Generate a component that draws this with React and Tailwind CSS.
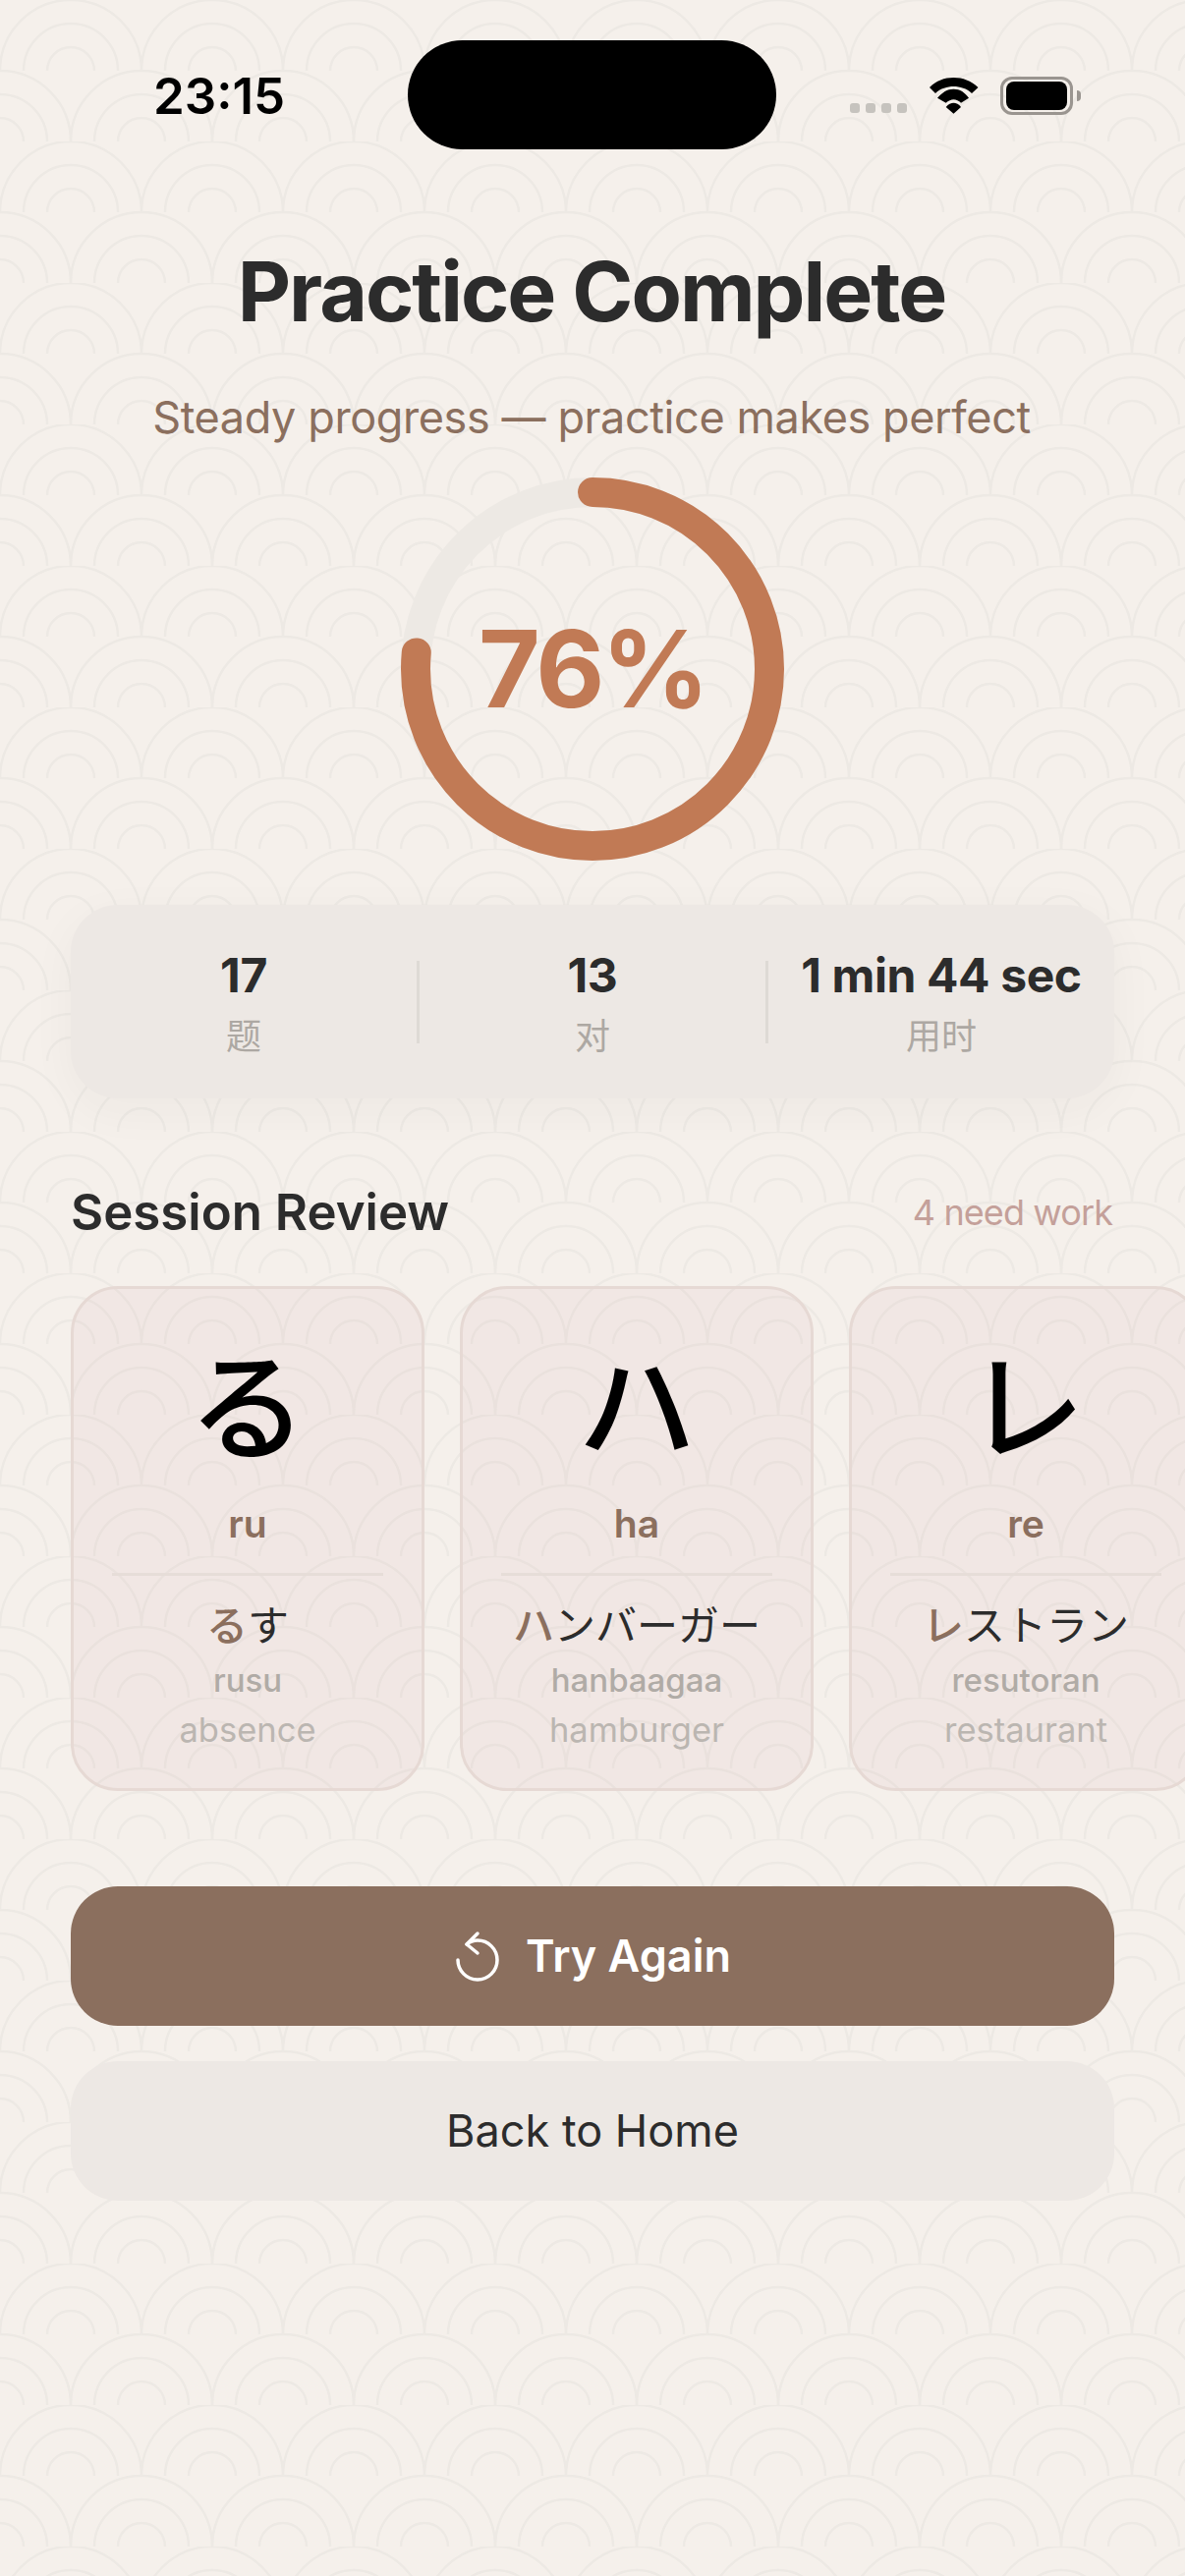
const CARDS = [
  { kana: 'る', romaji: 'ru', lead: 'る', rest: 'す', reading: 'rusu', meaning: 'absence' },
  { kana: 'ハ', romaji: 'ha', lead: 'ハ', rest: 'ンバーガー', reading: 'hanbaagaa', meaning: 'hamburger' },
  { kana: 'レ', romaji: 're', lead: 'レ', rest: 'ストラン', reading: 'resutoran', meaning: 'restaurant' },
];

const STATS = [
  { value: '17', label: '题' },
  { value: '13', label: '对' },
  { value: '1 min 44 sec', label: '用时' },
];

// seigaiha wave pattern behind the whole page
const WavePattern = () => (
  <svg className="absolute inset-0 h-full w-full" aria-hidden="true">
    <defs>
      <pattern id="waves" width="144" height="144" patternUnits="userSpaceOnUse">
        <g fill="none" stroke="#EDE9E4" strokeWidth="2.5">
          <path d="M0 72A72 72 0 0 1 144 72M24 72A48 48 0 0 1 120 72M48 72A24 24 0 0 1 96 72" />
          <path d="M72 144A72 72 0 0 1 216 144M96 144A48 48 0 0 1 192 144M120 144A24 24 0 0 1 168 144" />
          <path d="M-72 144A72 72 0 0 1 72 144M-48 144A48 48 0 0 1 48 144M-24 144A24 24 0 0 1 24 144" />
        </g>
      </pattern>
    </defs>
    <rect width="100%" height="100%" fill="url(#waves)" />
  </svg>
);

const StatusBar = () => (
  <div className="flex h-[111px] items-center pt-[41px] box-content">
    <div className="mt-[3px] w-[415px] pl-[156px] text-[51px] leading-[60px] font-semibold text-black">23:15</div>
    <div className="h-[111px] w-[375px] rounded-full bg-black" />
    <div className="mt-[2px] flex items-center pl-[75px]">
      <div className="mt-[25px] flex gap-[6px]">
        {[0, 1, 2, 3].map((i) => (
          <span key={i} className="h-[10px] w-[10px] rounded-[3px] bg-[#C6C3BE]" />
        ))}
      </div>
      <svg className="ml-[22px]" width="51" height="37" viewBox="0 0 51 37" fill="#000">
        <path d="M1 10C8 3 16 0 25.500 0C35 0 43 3 50.500 10L44 16C39 11 32 9 25.500 9C19 9 12 11 7 16Z" />
        <path d="M9 20.700C14 15 19 11.700 25.500 11.700C32 11.700 37 15 41 20.700L33 25.700C31 23.500 28 22.300 25.500 22.300C23 22.300 20 23.500 17.700 25.700Z" />
        <path d="M17.700 30C20 27 23 25.700 25.500 25.700C28 25.700 31 27 33 30L25.500 36.700Z" />
      </svg>
      <div className="ml-[22px] flex items-center">
        <div className="h-[39px] w-[74px] rounded-[12px] border-[3px] border-[#9A9590] px-[3px] py-[2px]">
          <div className="h-full w-full rounded-[8px] bg-black" />
        </div>
        <div className="ml-[4px] h-[11px] w-[4px] rounded-r-full bg-[#9A9590]" />
      </div>
    </div>
  </div>
);

const ScoreRing = () => (
  <div className="relative mx-auto h-[390px] w-[390px]">
    <svg width="390" height="390" viewBox="0 0 390 390" fill="none" className="-rotate-90">
      <circle cx="195" cy="195" r="180" stroke="#EDE9E4" strokeWidth="30" />
      <circle cx="195" cy="195" r="180" stroke="#C17A55" strokeWidth="30" strokeLinecap="round" pathLength="100" strokeDasharray="76.47 100" />
    </svg>
    <div className="absolute inset-0 flex items-center justify-center text-[108px] font-bold tracking-[-3px] text-[#C17A55]">76%</div>
  </div>
);

const StatsCard = () => (
  <div className="mx-[72px] mt-[45px] flex h-[197px] items-center rounded-[48px] bg-[#EDE8E4] shadow-[0_12px_48px_rgba(44,44,44,0.04)]">
    {STATS.map((stat, i) => (
      <div key={stat.label} className="contents">
        {i > 0 && <div className="h-[84px] w-[3px] shrink-0 bg-[#DEDAD5]" />}
        <div className="flex-1 pt-[2px] text-center">
          <div className="text-[48px] leading-[60px] font-bold tracking-[-0.4px] text-[#2C2C2C]">{stat.value}</div>
          <div className="mt-[8px] text-[36px] leading-[48px] text-[#ADA8A3]">{stat.label}</div>
        </div>
      </div>
    ))}
  </div>
);

const ReviewCard = ({ card }) => (
  <div className="h-[514px] w-[360px] shrink-0 rounded-[48px] border-[3px] border-[#E6D9D4] bg-[#B86478]/6 px-[39px] pt-[47px] text-center font-['Inter','Noto_Sans_CJK_JP',sans-serif]">
    <div className="text-[120px] leading-[150px] font-medium text-black">{card.kana}</div>
    <div className="mt-[18px] text-[39px] leading-[48px] font-semibold text-[#8B6F5E]">{card.romaji}</div>
    <div className="mt-[26px] h-[3px] bg-[#E6DDD8]" />
    <div className="mt-[25px] text-[42px] leading-[51px] whitespace-nowrap text-[#2C2C2C]">
      <span className="font-medium text-[#8B6F5E]">{card.lead}</span>
      {card.rest}
    </div>
    <div className="mt-[9px] text-[33px] leading-[42px] font-medium text-[#B0ABA6]">{card.reading}</div>
    <div className="mt-[9px] text-[34.500px] leading-[42px] text-[#BBB6B1]">{card.meaning}</div>
  </div>
);

const ReviewSection = () => (
  <div className="mt-[83px]">
    <div className="flex items-center justify-between pl-[72px] pr-[74px]">
      <h2 className="text-[51px] leading-[66px] font-semibold text-[#2C2C2C]">Session Review</h2>
      <span className="text-[36px] tracking-[-0.9px] text-[#C4A09A]">4 need work</span>
    </div>
    <div className="mt-[42px] flex gap-[36px] overflow-hidden pl-[72px]">
      {CARDS.map((card) => (
        <ReviewCard key={card.romaji} card={card} />
      ))}
    </div>
  </div>
);

const RetryIcon = () => (
  <svg width="48" height="48" viewBox="0 0 48 48" fill="none" stroke="#fff" strokeWidth="3.500" strokeLinecap="round" strokeLinejoin="round" className="overflow-visible">
    <path d="M13 12L24 1M13 12L24 21" />
    <path d="M13 12C16 9.500 20 8 24 8C35 8 44 17 44 28C44 39 35 48 24 48C13 48 4 39 4 28" />
  </svg>
);

export default function App() {
  return (
    <div className="relative h-[2622px] w-[1206px] overflow-hidden bg-[#F5F0EB] font-['Inter','Noto_Sans_CJK_SC',sans-serif]">
      <WavePattern />
      <div className="relative">
        <StatusBar />
        <h1 className="mt-[97px] pr-[2px] text-center text-[84px] leading-[96px] font-bold tracking-[-2px] text-[#2C2C2C]">Practice Complete</h1>
        <p className="mt-[50px] pr-[2px] text-center text-[45px] leading-[60px] tracking-[-0.4px] text-[#8B6F5E]">Steady progress — practice makes perfect</p>
        <div className="mt-[31px]">
          <ScoreRing />
        </div>
        <StatsCard />
        <ReviewSection />
        <div className="mx-[72px] mt-[97px] flex flex-col gap-[36px]">
          <button className="flex h-[142px] items-center justify-center gap-[25px] rounded-[48px] bg-[#8B6F5E] text-[45px] font-semibold text-white">
            <RetryIcon />
            Try Again
          </button>
          <button className="h-[142px] rounded-[48px] bg-[#EDE8E4] text-[45px] text-[#2C2C2C]">Back to Home</button>
        </div>
      </div>
    </div>
  );
}
